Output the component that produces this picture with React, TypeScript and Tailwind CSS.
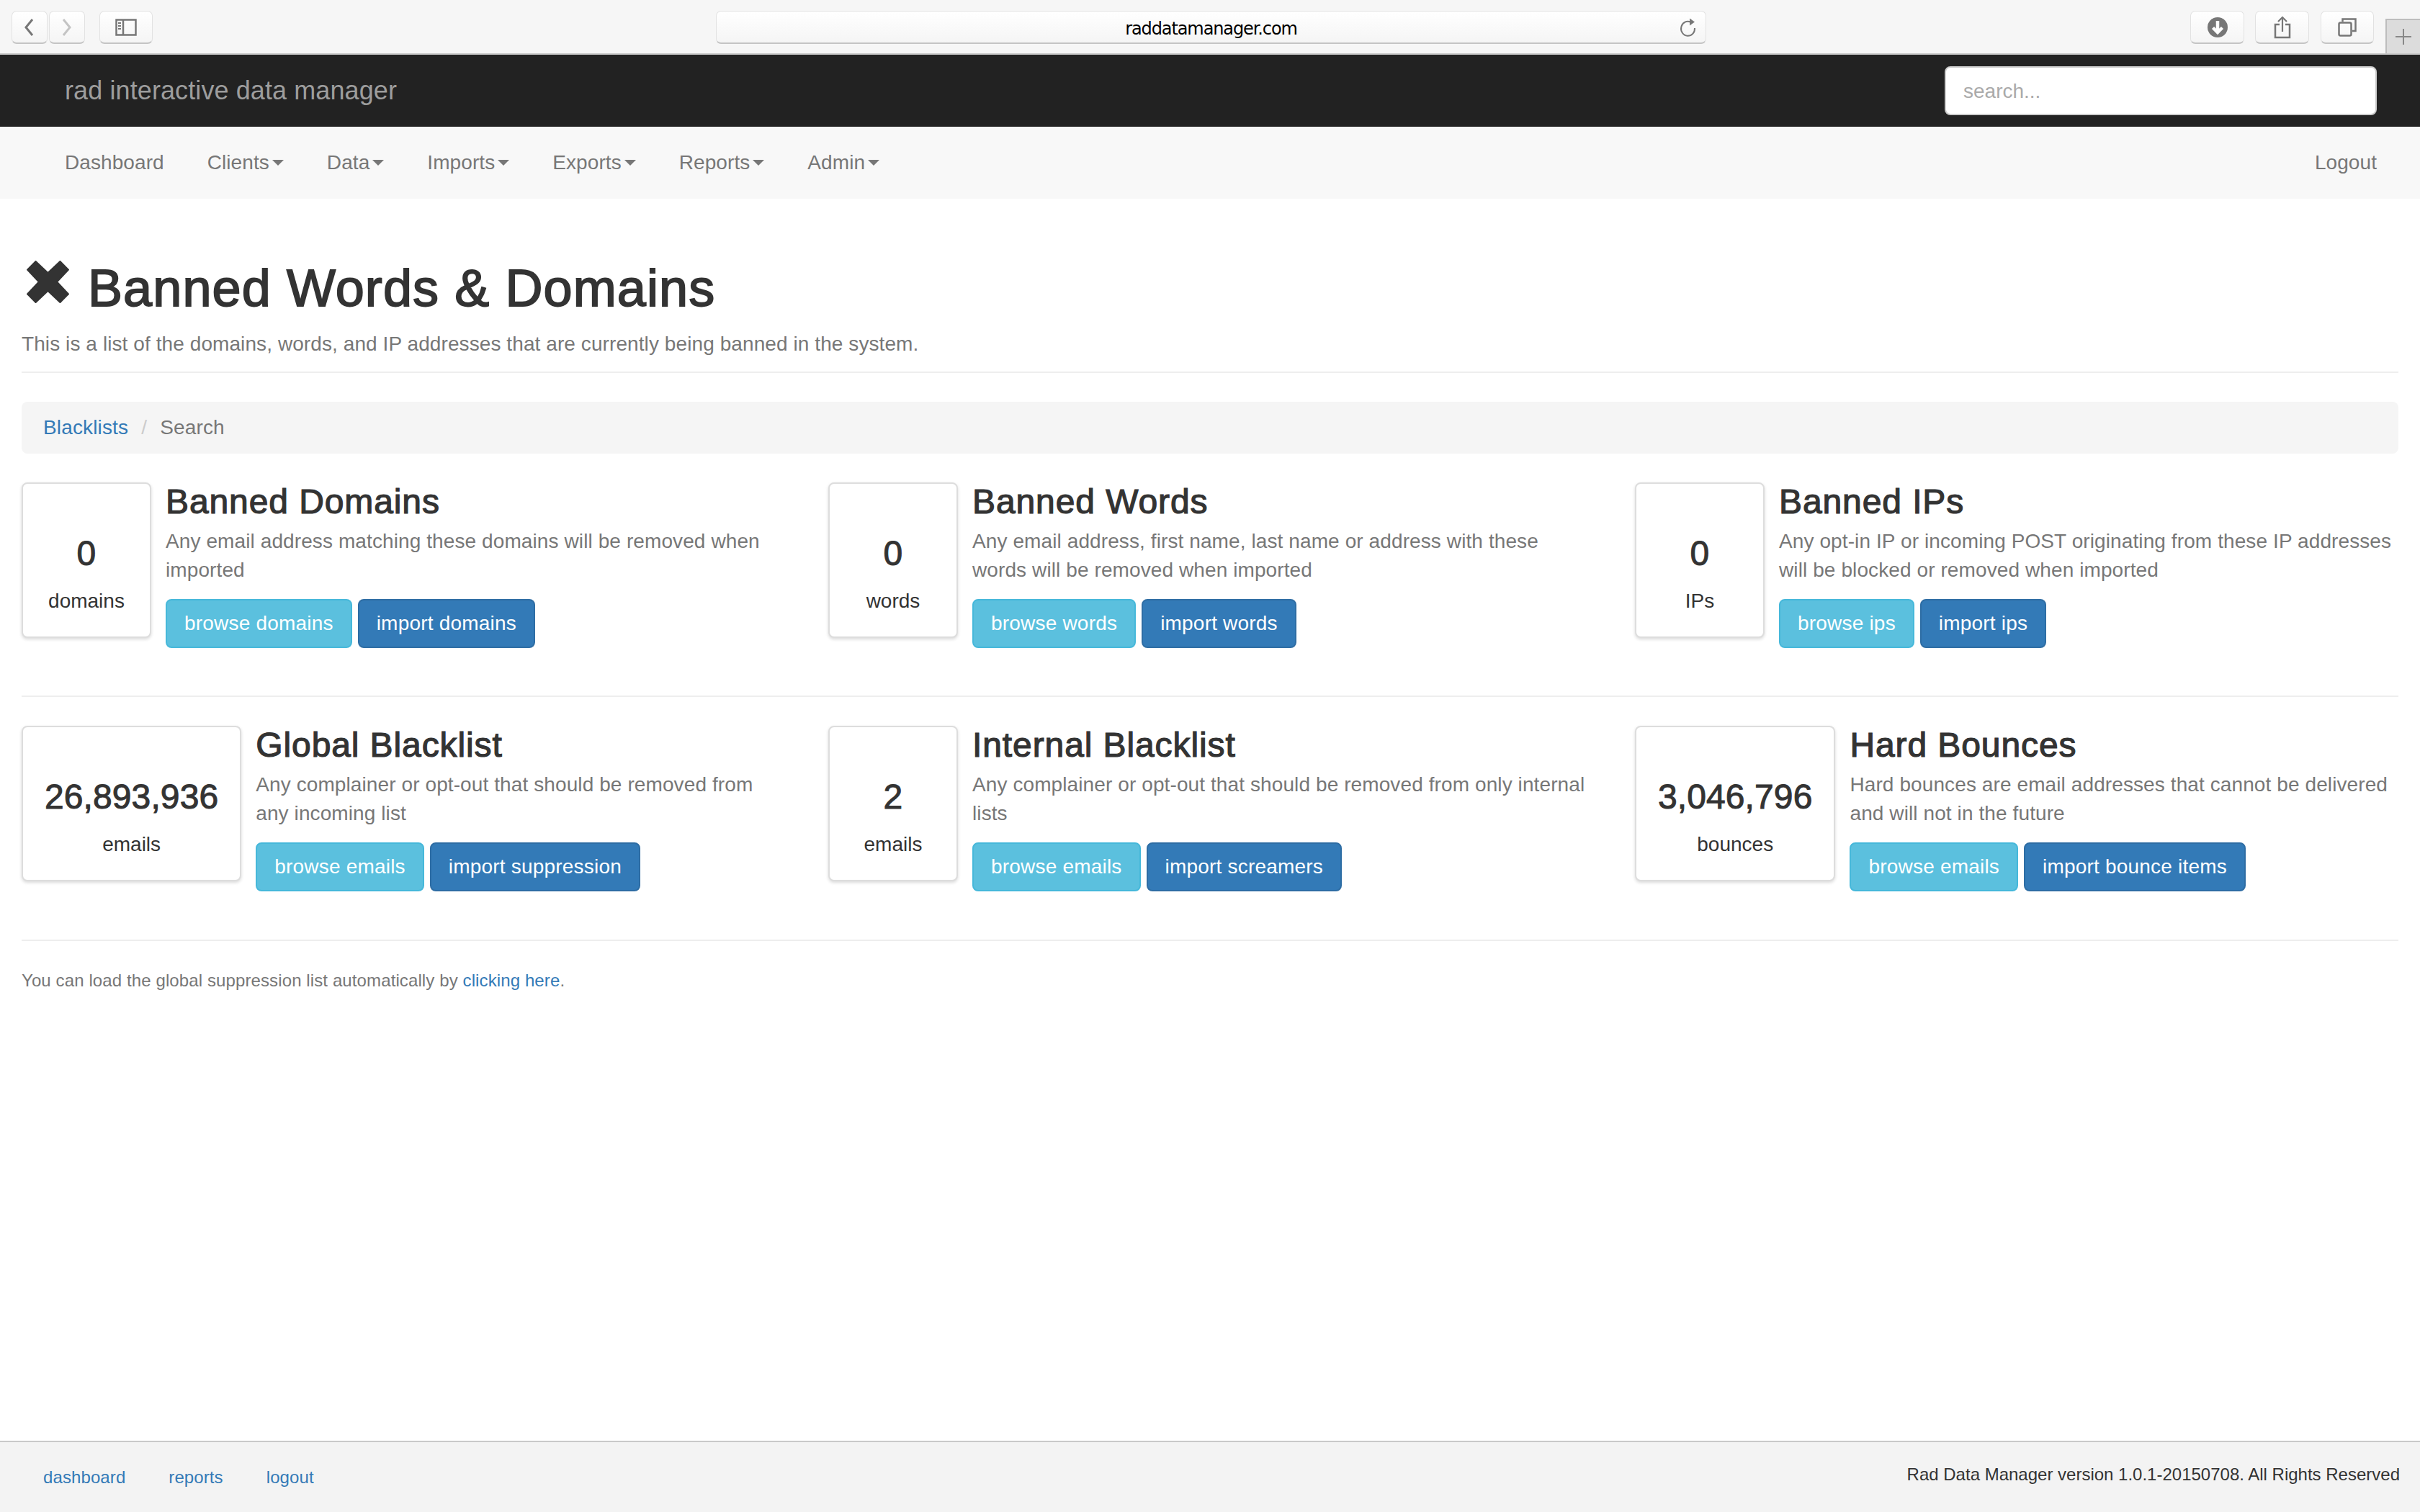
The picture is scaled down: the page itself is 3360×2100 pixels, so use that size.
import React from "react";

const TB = "bg-gradient-to-b from-[#ffffff] to-[#f5f5f5] border border-[#e2e2e2] border-b-2 border-b-[#c4c4c4] rounded-[7px] h-[46px] flex items-center justify-center";

function Caret() {
  return <span className="inline-block ml-[4px] align-middle w-0 h-0 border-x-[8px] border-x-transparent border-t-[8px] border-t-[#777]" />;
}

function Stat({ value, label }: { value: string; label: string }) {
  return (
    <div className="shrink-0 min-w-[180px] h-[216px] px-[30px] bg-white border-2 border-[#ddd] rounded-[8px] shadow-[0_2px_4px_rgba(0,0,0,0.15)] flex flex-col items-center">
      <div className="mt-[70px] h-[54px] leading-[54px] text-[48px] text-[#333] tracking-[0.1px] [-webkit-text-stroke:1px_#333]">{value}</div>
      <div className="mt-[19px] h-[40px] leading-[40px] text-[28px] text-[#333]">{label}</div>
    </div>
  );
}

function Item({ value, label, title, desc, a, b }: { value: string; label: string; title: string; desc: string; a: string; b: string }) {
  return (
    <div className="flex gap-[20px]">
      <Stat value={value} label={label} />
      <div className="flex-1">
        <h3 className="h-[54px] leading-[54px] text-[48px] text-[#333] tracking-[0.9px] [-webkit-text-stroke:1.2px_#333]">{title}</h3>
        <p className="mt-[8px] text-[28px] leading-[40px] text-[#777] tracking-[0.1px]">{desc}</p>
        <div className="mt-[20px] flex gap-[8px] tracking-[0.2px]">
          <span className="h-[68px] px-[24px] flex items-center text-[28px] text-white bg-[#5bc0de] border-2 border-[#46b8da] rounded-[8px]">{a}</span>
          <span className="h-[68px] px-[24px] flex items-center text-[28px] text-white bg-[#337ab7] border-2 border-[#2e6da4] rounded-[8px]">{b}</span>
        </div>
      </div>
    </div>
  );
}

export default function App() {
  return (
    <div className="min-h-[2100px] flex flex-col bg-white font-['Liberation_Sans',sans-serif]">
      {/* browser chrome */}
      <div className="h-[76px] shrink-0 bg-[#f6f6f6] border-b-2 border-[#c9c9c9] flex items-start pt-[15px] pl-[16px]">
        <div className={`${TB} w-[50px]`}>
          <svg className="-ml-[3px]" width="18" height="26" viewBox="0 0 18 26" fill="none" stroke="#777" strokeWidth="3"><path d="M14 2 5 13l9 11" /></svg>
        </div>
        <div className={`${TB} w-[50px] ml-[2px]`}>
          <svg width="18" height="26" viewBox="0 0 18 26" fill="none" stroke="#c4c4c4" strokeWidth="3"><path d="M4 2l9 11-9 11" /></svg>
        </div>
        <div className={`${TB} w-[74px] ml-[20px]`}>
          <svg width="30" height="24" viewBox="0 0 30 24" fill="none" stroke="#777" strokeWidth="2.5"><rect x="1.5" y="1.5" width="27" height="21" /><path d="M11 1v22" /><path d="M4 6h4M4 10h4M4 14h4" strokeWidth="2" /></svg>
        </div>
        <div className={`${TB} w-[1375px] ml-[782px] relative`}>
          <span className="text-[24px] text-black font-['DejaVu_Sans',sans-serif] tracking-[-1.1px] mt-[4px]">raddatamanager.com</span>
          <svg className="absolute right-[11px] top-[8px]" width="26" height="28" viewBox="0 0 26 28" fill="none" stroke="#777" strokeWidth="2"><path d="M16 6.5A9.5 10 0 1 0 22 15" /><path d="M15 1.5 22 6.5l-7 5z" fill="#777" stroke="none" /></svg>
        </div>
        <div className={`${TB} w-[75px] ml-[672px]`}>
          <svg width="28" height="28" viewBox="0 0 28 28" fill="none"><circle cx="14" cy="14" r="14" fill="#777" /><path d="M14 5v16M7.5 14.5 14 21l6.5-6.5" stroke="#fff" strokeWidth="4.5" /></svg>
        </div>
        <div className={`${TB} w-[75px] ml-[15px]`}>
          <svg width="24" height="32" viewBox="0 0 24 32" fill="none" stroke="#777" strokeWidth="2.5"><path d="M8 12H2v18h20V12h-6" /><path d="M12 22V2M6 8l6-6 6 6" strokeWidth="2.2" /></svg>
        </div>
        <div className={`${TB} w-[74px] ml-[16px]`}>
          <svg width="26" height="26" viewBox="0 0 26 26" fill="none" stroke="#777" strokeWidth="2.5"><rect x="1.5" y="6.5" width="17" height="18" rx="2" /><path d="M6.5 5V1.5h18V18H20" /></svg>
        </div>
        <div className="w-[48px] h-[48px] mt-[11px] ml-[16px] bg-[#dcdcdc] border-l-2 border-t-2 border-[#bdbdbd] flex items-center justify-center">
          <svg width="24" height="24" viewBox="0 0 24 24" stroke="#888" strokeWidth="2"><path d="M12 1v22M1 12h22" /></svg>
        </div>
      </div>

      {/* brand bar */}
      <div className="h-[100px] shrink-0 bg-[#222] flex items-center justify-between pl-[90px] pr-[60px]">
        <span className="text-[36px] text-[#9d9d9d] tracking-[0.1px]">rad interactive data manager</span>
        <div className="w-[600px] h-[68px] bg-white border-2 border-[#ccc] rounded-[8px] flex items-center px-[24px] pt-[1px] text-[28px] text-[#aaa]">search...</div>
      </div>

      {/* menu */}
      <div className="h-[100px] shrink-0 bg-[#f8f8f8] flex items-center justify-between pl-[90px] pr-[60px] text-[28px] text-[#777] tracking-[0.08px]">
        <div className="flex gap-[60px]">
          <span>Dashboard</span>
          {["Clients", "Data", "Imports", "Exports", "Reports", "Admin"].map((t) => (
            <span key={t} className="flex items-center">{t}<Caret /></span>
          ))}
        </div>
        <span>Logout</span>
      </div>

      {/* content */}
      <div className="flex-1 px-[30px]">
        <div className="mt-[84px] flex items-start">
          <svg className="mt-[2px] ml-[7px] shrink-0" width="59" height="59" viewBox="-1 -1 61 61" fill="#333" stroke="#333" strokeWidth="2" strokeLinejoin="round"><path d="M12 0 29.5 16.5 47 0 59 12 42.5 29.5 59 47 47 59 29.5 42.5 12 59 0 47 16.5 29.5 0 12z" /></svg>
          <h1 className="ml-[26px] h-[80px] leading-[80px] text-[72px] text-[#333] tracking-[1.1px] [-webkit-text-stroke:1.8px_#333]">Banned Words &amp; Domains</h1>
        </div>
        <p className="mt-[18px] text-[28px] leading-[40px] text-[#777] tracking-[0.085px]">This is a list of the domains, words, and IP addresses that are currently being banned in the system.</p>
        <div className="mt-[18px] h-[2px] bg-[#eee]" />

        <div className="mt-[40px] h-[72px] bg-[#f5f5f5] rounded-[8px] px-[30px] flex items-center text-[28px] tracking-[0.15px]">
          <span className="text-[#337ab7]">Blacklists</span>
          <span className="text-[#ccc] mx-[18px]">/</span>
          <span className="text-[#777]">Search</span>
        </div>

        <div className="mt-[40px] grid grid-cols-3 gap-x-[60px]">
          <Item value="0" label="domains" title="Banned Domains" desc="Any email address matching these domains will be removed when imported" a="browse domains" b="import domains" />
          <Item value="0" label="words" title="Banned Words" desc="Any email address, first name, last name or address with these words will be removed when imported" a="browse words" b="import words" />
          <Item value="0" label="IPs" title="Banned IPs" desc="Any opt-in IP or incoming POST originating from these IP addresses will be blocked or removed when imported" a="browse ips" b="import ips" />
        </div>
        <div className="mt-[66px] h-[2px] bg-[#eee]" />
        <div className="mt-[40px] grid grid-cols-3 gap-x-[60px]">
          <Item value="26,893,936" label="emails" title="Global Blacklist" desc="Any complainer or opt-out that should be removed from any incoming list" a="browse emails" b="import suppression" />
          <Item value="2" label="emails" title="Internal Blacklist" desc="Any complainer or opt-out that should be removed from only internal lists" a="browse emails" b="import screamers" />
          <Item value="3,046,796" label="bounces" title="Hard Bounces" desc="Hard bounces are email addresses that cannot be delivered and will not in the future" a="browse emails" b="import bounce items" />
        </div>
        <div className="mt-[67px] h-[2px] bg-[#eee]" />
        <p className="mt-[38px] text-[24px] leading-[34px] text-[#777] tracking-[0.11px]">You can load the global suppression list automatically by <span className="text-[#337ab7]">clicking here</span>.</p>
      </div>

      {/* footer */}
      <div className="h-[99px] shrink-0 bg-[#f3f3f3] border-t-2 border-[#c9c9c9] flex items-start justify-between pl-[60px] pr-[28px] text-[24px]">
        <div className="mt-[31px] flex gap-[60px] text-[#337ab7] tracking-[0.1px]">
          <span>dashboard</span><span>reports</span><span>logout</span>
        </div>
        <span className="mt-[27px] text-[#333]">Rad Data Manager version 1.0.1-20150708. All Rights Reserved</span>
      </div>
    </div>
  );
}
